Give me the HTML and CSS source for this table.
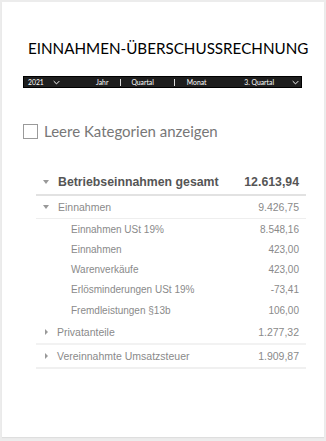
FILE: index.html
```html
<!DOCTYPE html>
<html lang="de">
<head>
<meta charset="utf-8">
<link rel="stylesheet" href="styles.css">
</head>
<body>
<div class="card">
  <h1 class="title">EINNAHMEN-ÜBERSCHUSSRECHNUNG</h1>
  <div class="bar">
    <div class="bar-year"><span>2021</span><svg class="chev" viewBox="0 0 10 6" width="7" height="5"><path d="M1 1 L5 5 L9 1" fill="none" stroke="#fff" stroke-width="1.4"/></svg></div>
    <div class="bar-tabs"><span class="tab t1">Jahr</span><span class="sep"></span><span class="tab t2">Quartal</span><span class="sep"></span><span class="tab t3">Monat</span></div>
    <div class="bar-period"><span>3. Quartal</span><svg class="chev" viewBox="0 0 10 6" width="7" height="5"><path d="M1 1 L5 5 L9 1" fill="none" stroke="#fff" stroke-width="1.4"/></svg></div>
  </div>
  <label class="check"><span class="box"></span><span>Leere Kategorien anzeigen</span></label>
  <div class="table">
    <div class="row head"><span class="tri down"></span><span class="name">Betriebseinnahmen gesamt</span><span class="val">12.613,94</span></div>
    <div class="row lvl1 einn"><span class="tri down"></span><span class="name">Einnahmen</span><span class="val">9.426,75</span></div>
    <div class="group">
      <div class="row lvl2"><span class="name">Einnahmen USt 19%</span><span class="val">8.548,16</span></div>
      <div class="row lvl2"><span class="name">Einnahmen</span><span class="val">423,00</span></div>
      <div class="row lvl2"><span class="name">Warenverkäufe</span><span class="val">423,00</span></div>
      <div class="row lvl2"><span class="name">Erlösminderungen USt 19%</span><span class="val">-73,41</span></div>
      <div class="row lvl2"><span class="name">Fremdleistungen §13b</span><span class="val">106,00</span></div>
    </div>
    <div class="row lvl1 priv"><span class="tri right"></span><span class="name">Privatanteile</span><span class="val">1.277,32</span></div>
    <div class="row lvl1 ust"><span class="tri right"></span><span class="name">Vereinnahmte Umsatzsteuer</span><span class="val">1.909,87</span></div>
  </div>
</div>
</body>
</html>
```
FILE: styles.css
```css
html, body { margin: 0; padding: 0; }
body {
  background: #ececec;
  width: 326px;
  height: 441px;
  padding: 2px 2px 0 2px;
  box-sizing: border-box;
  font-family: "Liberation Sans", Arial, sans-serif;
}
.card {
  background: #fff;
  height: 435px;
  box-sizing: border-box;
  padding: 36px 22px 0 21px;
  box-shadow: 0 1px 1px rgba(0,0,0,0.06);
}
.title {
  margin: 0;
  padding-left: 5px;
  font-family: Lato, sans-serif;
  font-weight: 400;
  font-size: 15.2px;
  color: #000;
  text-align: center;
  white-space: nowrap;
  line-height: 20px;
}
.bar {
  margin-top: 18px;
  background: #1e1e1e;
  border: 1px solid #000;
  height: 10px;
  display: flex;
  align-items: center;
  color: #fff;
  font-family: Lato, sans-serif;
  font-size: 6.8px;
  line-height: 10px;
  padding: 0 2px 0 4px;
  white-space: nowrap;
}
.bar-year { display: flex; align-items: center; justify-content: space-between; width: 32px; }
.bar-tabs { display: flex; align-items: center; margin-left: 36px; }
.bar-tabs .sep { width: 1px; height: 7px; background: #ddd; }
.t1 { margin-right: 12px; }
.t2 { margin: 0 20px 0 10px; }
.t3 { margin-left: 12px; }
.bar-period { display: flex; align-items: center; gap: 18px; margin-left: auto; }
.chev { display: block; }
.check {
  display: flex;
  align-items: center;
  margin-top: 35px;
  height: 16px;
  font-family: Lato, sans-serif;
  font-size: 15px;
  line-height: 16px;
  color: #777;
}
.box {
  width: 13px;
  height: 13px;
  border: 1px solid #9a9a9a;
  margin-right: 6px;
  box-sizing: content-box;
}
.table {
  margin: 31px 0 0 13px;
  width: 270px;
  white-space: nowrap;
}
.row {
  display: flex;
  align-items: center;
  color: #8a8a8a;
}
.row .name { flex: 1; }
.row .val { padding-right: 7px; }
.tri { width: 0; height: 0; margin-left: 7px; margin-right: 9px; }
.tri.down { border-left: 3.5px solid transparent; border-right: 3.5px solid transparent; border-top: 4px solid #999; }
.tri.right { border-top: 3.5px solid transparent; border-bottom: 3.5px solid transparent; border-left: 3.5px solid #999; margin-left: 9px; margin-right: 9px; }
.head {
  height: 24px;
  font-weight: bold;
  font-size: 12.3px;
  color: #555;
  border-bottom: 2px solid #e2e2e2;
}
.lvl1 { font-size: 10.5px; }
.einn { height: 22px; border-bottom: 1px solid #eee; }
.lvl2 { height: 20.25px; font-size: 10px; padding-left: 35px; }
.priv { height: 23px; border-bottom: 2px solid #f2f2f2; }
.ust { height: 22px; border-bottom: 2px solid #f0f0f0; }
```
